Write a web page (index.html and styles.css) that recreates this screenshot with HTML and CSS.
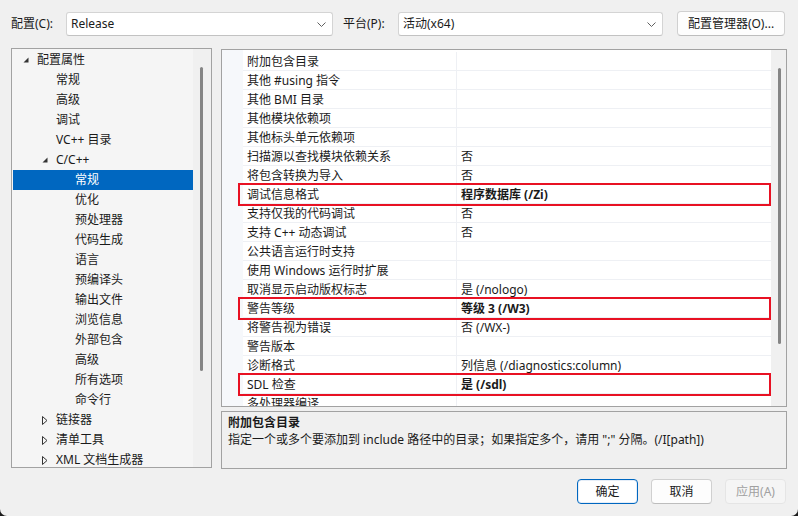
FILE: index.html
```html
<!DOCTYPE html>
<html lang="zh-CN">
<head>
<meta charset="utf-8">
<title>属性页</title>
<link rel="stylesheet" href="styles.css">
</head>
<body>
<div class="window">
  <div class="topbar">
    <span class="lbl">配置(C):</span>
    <div class="combo combo-config"><span>Release</span><svg class="chev" width="9" height="5" viewBox="0 0 9 5"><path d="M0.5 0.5 L4.5 4.5 L8.5 0.5" fill="none" stroke="#606060" stroke-width="1"/></svg></div>
    <span class="lbl">平台(P):</span>
    <div class="combo combo-platform"><span>活动(x64)</span><svg class="chev" width="9" height="5" viewBox="0 0 9 5"><path d="M0.5 0.5 L4.5 4.5 L8.5 0.5" fill="none" stroke="#606060" stroke-width="1"/></svg></div>
    <button class="btn btn-mgr">配置管理器(O)...</button>
  </div>

  <div class="main">
    <div class="tree">
      <div class="tree-list">
        <div class="node l0"><span class="tw"><svg width="6" height="6" viewBox="0 0 6 6"><path d="M5.5 0.5 L5.5 5.5 L0.5 5.5 Z" fill="#333"/></svg></span>配置属性</div>
        <div class="node l1">常规</div>
        <div class="node l1">高级</div>
        <div class="node l1">调试</div>
        <div class="node l1">VC++ 目录</div>
        <div class="node l1a"><span class="tw"><svg width="6" height="6" viewBox="0 0 6 6"><path d="M5.5 0.5 L5.5 5.5 L0.5 5.5 Z" fill="#333"/></svg></span>C/C++</div>
        <div class="node l2 sel">常规</div>
        <div class="node l2">优化</div>
        <div class="node l2">预处理器</div>
        <div class="node l2">代码生成</div>
        <div class="node l2">语言</div>
        <div class="node l2">预编译头</div>
        <div class="node l2">输出文件</div>
        <div class="node l2">浏览信息</div>
        <div class="node l2">外部包含</div>
        <div class="node l2">高级</div>
        <div class="node l2">所有选项</div>
        <div class="node l2">命令行</div>
        <div class="node l1a"><span class="tw"><svg width="6" height="9" viewBox="0 0 6 9"><path d="M0.5 0.5 L5 4.5 L0.5 8.5 Z" fill="none" stroke="#333" stroke-width="1"/></svg></span>链接器</div>
        <div class="node l1a"><span class="tw"><svg width="6" height="9" viewBox="0 0 6 9"><path d="M0.5 0.5 L5 4.5 L0.5 8.5 Z" fill="none" stroke="#333" stroke-width="1"/></svg></span>清单工具</div>
        <div class="node l1a"><span class="tw"><svg width="6" height="9" viewBox="0 0 6 9"><path d="M0.5 0.5 L5 4.5 L0.5 8.5 Z" fill="none" stroke="#333" stroke-width="1"/></svg></span>XML 文档生成器</div>
      </div>
      <div class="vscroll tree-scroll"><div class="thumb"></div></div>
    </div>

    <div class="right">
      <div class="grid">
        <div class="rows">
          <div class="row"><span class="gut"></span><span class="name">附加包含目录</span><span class="val"></span></div>
          <div class="row"><span class="gut"></span><span class="name">其他 #using 指令</span><span class="val"></span></div>
          <div class="row"><span class="gut"></span><span class="name">其他 BMI 目录</span><span class="val"></span></div>
          <div class="row"><span class="gut"></span><span class="name">其他模块依赖项</span><span class="val"></span></div>
          <div class="row"><span class="gut"></span><span class="name">其他标头单元依赖项</span><span class="val"></span></div>
          <div class="row"><span class="gut"></span><span class="name">扫描源以查找模块依赖关系</span><span class="val">否</span></div>
          <div class="row"><span class="gut"></span><span class="name">将包含转换为导入</span><span class="val">否</span></div>
          <div class="row hl"><span class="gut"></span><span class="name">调试信息格式</span><span class="val b">程序数据库 (/Zi)</span></div>
          <div class="row"><span class="gut"></span><span class="name">支持仅我的代码调试</span><span class="val">否</span></div>
          <div class="row"><span class="gut"></span><span class="name">支持 C++ 动态调试</span><span class="val">否</span></div>
          <div class="row"><span class="gut"></span><span class="name">公共语言运行时支持</span><span class="val"></span></div>
          <div class="row"><span class="gut"></span><span class="name">使用 Windows 运行时扩展</span><span class="val"></span></div>
          <div class="row"><span class="gut"></span><span class="name">取消显示启动版权标志</span><span class="val">是 (/nologo)</span></div>
          <div class="row hl"><span class="gut"></span><span class="name">警告等级</span><span class="val b">等级 3 (/W3)</span></div>
          <div class="row"><span class="gut"></span><span class="name">将警告视为错误</span><span class="val">否 (/WX-)</span></div>
          <div class="row"><span class="gut"></span><span class="name">警告版本</span><span class="val"></span></div>
          <div class="row"><span class="gut"></span><span class="name">诊断格式</span><span class="val">列信息 (/diagnostics:column)</span></div>
          <div class="row hl"><span class="gut"></span><span class="name">SDL 检查</span><span class="val b">是 (/sdl)</span></div>
          <div class="row"><span class="gut"></span><span class="name">多处理器编译</span><span class="val"></span></div>
        </div>
        <div class="vscroll grid-scroll"><div class="thumb"></div></div>
      </div>
      <div class="desc">
        <div class="desc-title">附加包含目录</div>
        <div class="desc-text">指定一个或多个要添加到 include 路径中的目录；如果指定多个，请用 ";" 分隔。(/I[path])</div>
      </div>
    </div>
  </div>

  <div class="buttons">
    <button class="btn btn-ok">确定</button>
    <button class="btn">取消</button>
    <button class="btn btn-dis">应用(A)</button>
  </div>
</div>
</body>
</html>
```
FILE: styles.css
```css
html {
  margin: 0;
  background: #1c1c1c;
}
body {
  margin: 0;
  width: 798px;
  height: 516px;
  overflow: hidden;
}
.window {
  width: 798px;
  height: 516px;
  background: #f0f0f0;
  border-radius: 0 0 7px 7px;
  font-family: "Noto Sans", "Noto Sans CJK SC", sans-serif;
  font-size: 12px;
  color: #1a1a1a;
  overflow: hidden;
}
.topbar {
  display: flex;
  align-items: center;
  padding: 12px 0 0 11px;
  height: 24px;
}
.lbl {
  width: 55px;
  line-height: 16px;
}
.combo {
  box-sizing: border-box;
  height: 24px;
  background: #fff;
  border: 1px solid #d4d4d4;
  border-bottom-color: #c2c2c2;
  border-radius: 3px;
  display: flex;
  align-items: center;
  justify-content: space-between;
  padding: 0 6px 0 4px;
  line-height: 16px;
}
.combo-config { width: 267px; margin-right: 10px; }
.combo-platform { width: 265px; margin-right: 14px; }
.chev { display: block; }
.btn {
  box-sizing: border-box;
  height: 25px;
  width: 61px;
  background: #fdfdfd;
  border: 1px solid #d0d0d0;
  border-bottom-color: #bdbdbd;
  border-radius: 4px;
  font-family: inherit;
  font-size: 12px;
  color: #1a1a1a;
  padding: 0;
  line-height: 16px;
}
.btn-mgr { width: 108px; margin-top: -1px; }
.main {
  display: flex;
  margin-top: 12px;
  padding-left: 11px;
  gap: 9px;
}
.tree {
  box-sizing: border-box;
  width: 201px;
  height: 420px;
  border: 1px solid #a2a2a2;
  background: #f5f5f5;
  display: flex;
}
.tree-list {
  width: 180px;
  padding: 1px 0 0 1px;
  overflow: hidden;
}
.node {
  height: 20px;
  line-height: 20px;
  display: flex;
  align-items: center;
  white-space: nowrap;
}
.node.sel { background: #0067c0; color: #fff; }
.tw {
  width: 14px;
  display: flex;
  align-items: center;
}
.tw svg { display: block; }
.l0 { padding-left: 10px; }
.l1 { padding-left: 43px; }
.l1a { padding-left: 29px; }
.l2 { padding-left: 62px; }
.vscroll {
  position: relative;
  background: #f0f0f0;
}
.tree-scroll { width: 18px; }
.grid-scroll { width: 15px; }
.thumb {
  position: absolute;
  width: 3px;
  border-radius: 2px;
  background: #858585;
}
.tree-scroll .thumb { left: 7px; top: 18px; height: 304px; }
.grid-scroll .thumb { left: 7px; top: 18px; height: 276px; }
.right {
  width: 566px;
  margin-top: 1px;
  display: flex;
  flex-direction: column;
  gap: 4px;
}
.grid {
  box-sizing: border-box;
  height: 358px;
  border: 1px solid #a2a2a2;
  background: #fff;
  display: flex;
}
.rows {
  flex: 1;
  padding-top: 2px;
  overflow: hidden;
  background: linear-gradient(to right, #f6f8fb 0 21px, transparent 21px);
}
.row {
  position: relative;
  display: flex;
  height: 19px;
  white-space: nowrap;
}
.gut { width: 21px; flex: none; }
.name,
.val {
  box-sizing: border-box;
  height: 19px;
  padding-top: 1px;
  line-height: 17px;
  border-bottom: 1px solid #eef0f4;
}
.name {
  width: 214px;
  flex: none;
  padding-left: 4px;
  border-right: 1px solid #eef0f4;
}
.val {
  flex: 1;
  padding-left: 4px;
}
.val.b { font-weight: bold; }
.row.hl::after {
  content: "";
  position: absolute;
  left: 16px;
  right: 0;
  top: -2px;
  bottom: -2px;
  border: 2px solid #e81123;
  z-index: 1;
}
.desc {
  box-sizing: border-box;
  height: 58px;
  border: 1px solid #a2a2a2;
  background: #f0f0f0;
  padding: 2px 0 0 6px;
  line-height: 17px;
}
.desc-title { font-weight: bold; }
.buttons {
  display: flex;
  justify-content: flex-end;
  gap: 13px;
  padding-right: 12px;
  margin-top: 10px;
}
.btn-ok {
  background: #fff;
  border: 1px solid #0067c0;
  box-shadow: inset 0 0 0 1px #e6eef8;
}
.btn-dis {
  background: #f5f5f5;
  border-color: #e5e5e5;
  color: #a0a0a0;
}
```
